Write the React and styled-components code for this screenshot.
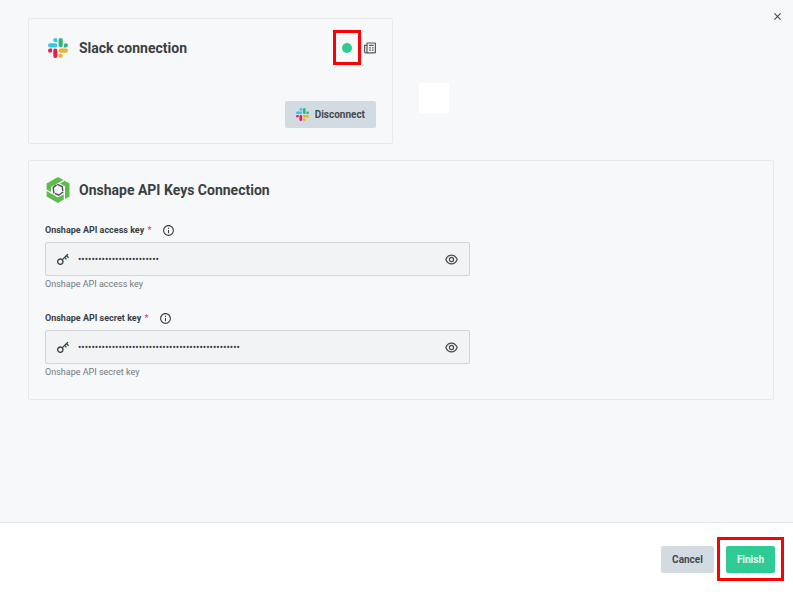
import { useState } from "react";
import styled, { createGlobalStyle } from "styled-components";
import { RiInformationLine, RiKey2Line, RiCloseFill } from "react-icons/ri";

const SlackLogo = ({ size }) => (
  <svg width={size} height={size} viewBox="0 0 24 24" aria-hidden="true">
    <path
      fill="#36c5f0"
      d="M8.8 0a2.5 2.5 0 1 0 0 5h2.5V2.5A2.5 2.5 0 0 0 8.8 0zM8.8 6.3H2.5a2.5 2.5 0 0 0 0 5h6.3a2.5 2.5 0 0 0 0-5z"
    />
    <path
      fill="#2eb67d"
      d="M24 8.8a2.5 2.5 0 1 0-5 0v2.5h2.5A2.5 2.5 0 0 0 24 8.8zM17.7 8.8V2.5a2.5 2.5 0 0 0-5 0v6.3a2.5 2.5 0 0 0 5 0z"
    />
    <path
      fill="#ecb22e"
      d="M15.2 24a2.5 2.5 0 1 0 0-5h-2.5v2.5a2.5 2.5 0 0 0 2.5 2.5zM15.2 17.7h6.3a2.5 2.5 0 0 0 0-5h-6.3a2.5 2.5 0 0 0 0 5z"
    />
    <path
      fill="#e01e5a"
      d="M0 15.2a2.5 2.5 0 1 0 5 0v-2.5H2.5A2.5 2.5 0 0 0 0 15.2zM6.3 15.2v6.3a2.5 2.5 0 0 0 5 0v-6.3a2.5 2.5 0 0 0-5 0z"
    />
  </svg>
);

const OnshapeLogo = () => (
  <svg width="24" height="26" viewBox="0 0 24 26" aria-hidden="true">
    <g fill="#60bb4d">
      <path d="M12 0L17.6 3.1L5 10.1V15L.6 12.6V6.4z" />
      <path d="M18.7 3.8L23.5 6.4V19.4L19 21.9V9.2L13.9 6.4z" />
      <path d="M.6 14L11.9 20.5L17.8 17.2V22.6L12 26L.6 19.5z" />
    </g>
    <path
      d="M11.2 7.3L16.2 9.5L17 15L12.8 18.2L7.9 16L7.2 10.6z"
      fill="#f7f8fa"
      stroke="#4a5052"
      strokeWidth="1.4"
      strokeDasharray="9.8 1"
    />
  </svg>
);

const NewspaperIcon = () => (
  <svg
    width="12"
    height="12"
    viewBox="0 0 12 12"
    fill="none"
    stroke="currentColor"
    strokeWidth="1.2"
    strokeLinejoin="round"
    aria-hidden="true"
  >
    <path d="M3 10.8V1.6Q3 1 3.6 1H10.8Q11.4 1 11.4 1.6V10.2Q11.4 10.8 10.8 10.8H1.8Q.6 10.8 .6 9.6V3.4H3" />
    <path d="M5 3.4h4.6M5 5.8h1.8M8 5.8h1.6M5 8.2h1.8M8 8.2h1.6" />
  </svg>
);

const EyeIcon = () => (
  <svg
    width="13"
    height="11"
    viewBox="0 0 13 11"
    fill="none"
    stroke="currentColor"
    strokeWidth="1.2"
    aria-hidden="true"
  >
    <path d="M.8 5.5C2 2.5 4 1.1 6.5 1.1S11 2.5 12.2 5.5C11 8.5 9 9.9 6.5 9.9S2 8.5 .8 5.5z" />
    <circle cx="6.5" cy="5.5" r="2.1" />
  </svg>
);

const KeyField = ({ id, label, initialValue }) => {
  const [value, setValue] = useState(initialValue);
  const [visible, setVisible] = useState(false);

  return (
    <Field>
      <LabelRow>
        <label htmlFor={id}>
          {label} <Required>*</Required>
        </label>
        <RiInformationLine size={13} />
      </LabelRow>
      <InputBox>
        <RiKey2Line size={16} />
        <input
          id={id}
          type={visible ? "text" : "password"}
          value={value}
          onChange={(e) => setValue(e.target.value)}
        />
        <IconButton
          type="button"
          aria-label={`Show ${label}`}
          onClick={() => setVisible(!visible)}
        >
          <EyeIcon />
        </IconButton>
      </InputBox>
      <Helper>{label}</Helper>
    </Field>
  );
};

const App = () => {
  return (
    <Page>
      <GlobalStyle />
      <CloseButton type="button" aria-label="Close">
        <RiCloseFill size={13} />
      </CloseButton>
      <Main>
        <TopRow>
          <SlackCard>
            <CardHeader>
              <LogoSlot>
                <SlackLogo size={20} />
              </LogoSlot>
              <h2>Slack connection</h2>
              <CardTools>
                <StatusHighlight>
                  <StatusDot />
                </StatusHighlight>
                <NewspaperIcon />
              </CardTools>
            </CardHeader>
            <Actions>
              <Button type="button">
                <SlackLogo size={13} />
                Disconnect
              </Button>
            </Actions>
          </SlackCard>
          <BlankTile />
        </TopRow>
        <Card>
          <CardHeader>
            <LogoSlot>
              <OnshapeLogo />
            </LogoSlot>
            <h2>Onshape API Keys Connection</h2>
          </CardHeader>
          <Fields>
            <KeyField
              id="access-key"
              label="Onshape API access key"
              initialValue={"x".repeat(24)}
            />
            <KeyField
              id="secret-key"
              label="Onshape API secret key"
              initialValue={"x".repeat(48)}
            />
          </Fields>
        </Card>
      </Main>
      <Footer>
        <Button type="button">Cancel</Button>
        <FinishHighlight>
          <Button type="button" $primary>
            Finish
          </Button>
        </FinishHighlight>
      </Footer>
    </Page>
  );
};

export default App;

const GlobalStyle = createGlobalStyle`
  * {
    box-sizing: border-box;
  }
  body {
    margin: 0;
    color: #3b3f42;
    font-family: Roboto, "Liberation Sans", sans-serif;
  }
  svg {
    display: block;
    flex-shrink: 0;
  }
`;

const Page = styled.div`
  position: relative;
  display: flex;
  flex-direction: column;
  min-height: 100vh;
  background: #f7f8fa;
`;

const IconButton = styled.button`
  padding: 0;
  color: #45494c;
  background: transparent;
  border: none;
  cursor: pointer;
`;

const CloseButton = styled(IconButton)`
  position: absolute;
  top: 10px;
  right: 9px;
`;

const Main = styled.main`
  flex: 1;
  display: flex;
  flex-direction: column;
  gap: 16px;
  padding: 18px 19px 24px 28px;
`;

const TopRow = styled.div`
  display: flex;
  align-items: flex-end;
  gap: 26px;
`;

const Card = styled.section`
  padding: 11px 16px 21px;
  border: 1px solid #e6eaec;
  border-radius: 2px;
`;

const SlackCard = styled(Card)`
  display: flex;
  flex-direction: column;
  justify-content: space-between;
  width: 365px;
  min-height: 126px;
  padding-bottom: 15px;
`;

const CardHeader = styled.div`
  display: flex;
  align-items: center;
  gap: 9px;
  height: 35px;
  > h2 {
    margin: 0;
    font-size: 14px;
    line-height: 20px;
    font-weight: bold;
  }
`;

const LogoSlot = styled.div`
  display: flex;
  justify-content: center;
  width: 25px;
`;

const CardTools = styled.div`
  display: flex;
  align-items: center;
  gap: 3px;
  margin-left: auto;
  color: #55595c;
`;

const StatusHighlight = styled.div`
  display: flex;
  align-items: center;
  justify-content: center;
  width: 28px;
  height: 35px;
  border: 3px solid #fb0007;
`;

const StatusDot = styled.span`
  width: 10px;
  height: 10px;
  border-radius: 50%;
  background: #2ecb93;
`;

const Actions = styled.div`
  display: flex;
  justify-content: flex-end;
`;

const Button = styled.button`
  display: flex;
  align-items: center;
  gap: 6px;
  height: 27px;
  padding: 0 11px;
  color: ${({ $primary }) => ($primary ? "#e9fbf3" : "#42494e")};
  background: ${({ $primary }) => ($primary ? "#2ecc94" : "#d2dbe1")};
  border: none;
  border-radius: 2px;
  font-family: inherit;
  font-size: 10px;
  font-weight: bold;
  cursor: pointer;
`;

const BlankTile = styled.div`
  width: 30px;
  height: 30px;
  margin-bottom: 31px;
  background: #fff;
`;

const Fields = styled.div`
  display: flex;
  flex-direction: column;
  gap: 20px;
  max-width: 425px;
  margin-top: 15px;
`;

const Field = styled.div`
  display: flex;
  flex-direction: column;
`;

const LabelRow = styled.div`
  display: flex;
  align-items: center;
  gap: 10px;
  height: 16px;
  margin-bottom: 4px;
  font-size: 9px;
  font-weight: bold;
`;

const Required = styled.span`
  margin-left: 1px;
  color: #f0475c;
`;

const InputBox = styled.div`
  display: flex;
  align-items: center;
  height: 34px;
  padding: 0 11px 0 9px;
  background: #f2f3f5;
  border: 1px solid #d2d5d8;
  border-radius: 2px;
  > input {
    flex: 1;
    min-width: 0;
    padding: 0 0 0 7px;
    color: #3b3f42;
    background: transparent;
    border: none;
    outline: none;
    font-family: inherit;
    font-size: 10px;
  }
`;

const Helper = styled.p`
  margin: 2px 0 0;
  color: #74787b;
  font-size: 9px;
  line-height: 12px;
`;

const Footer = styled.footer`
  display: flex;
  align-items: center;
  justify-content: flex-end;
  gap: 3px;
  padding: 14px 9px;
  background: #fff;
  border-top: 1px solid #e3e6e8;
`;

const FinishHighlight = styled.div`
  padding: 6px 6px 5px;
  border: 3px solid #fb0007;
`;
